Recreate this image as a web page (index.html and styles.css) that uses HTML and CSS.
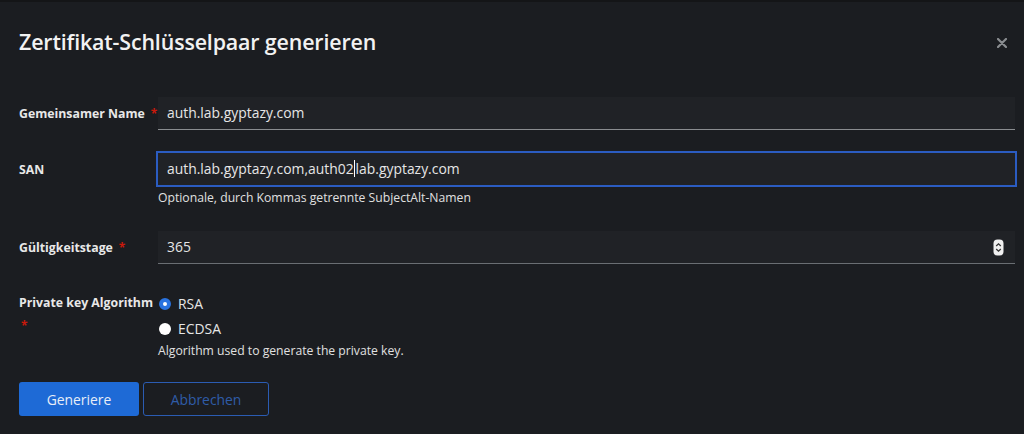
FILE: index.html
```html
<!DOCTYPE html>
<html lang="de">
<head>
<meta charset="utf-8">
<link rel="stylesheet" href="styles.css">
</head>
<body>
<div class="modal">
  <div class="topline"></div>
  <header class="header">
    <h1 class="title">Zertifikat-Schlüsselpaar generieren</h1>
    <button class="close" aria-label="Schließen">
      <svg width="10" height="10" viewBox="0 0 10 10"><path d="M1 1L9 9M9 1L1 9" stroke="#8a8d90" stroke-width="2.2" stroke-linecap="round"/></svg>
    </button>
  </header>
  <form class="form">
    <div class="row row-cn">
      <label class="label">Gemeinsamer Name<span class="req">*</span></label>
      <div class="control">
        <div class="input">auth.lab.gyptazy.com</div>
      </div>
    </div>
    <div class="row row-san">
      <label class="label">SAN</label>
      <div class="control">
        <div class="input focus">auth.lab.gyptazy.com,auth02<span class="caret"></span>lab.gyptazy.com</div>
        <div class="helper">Optionale, durch Kommas getrennte SubjectAlt-Namen</div>
      </div>
    </div>
    <div class="row row-days">
      <label class="label">Gültigkeitstage<span class="req">*</span></label>
      <div class="control">
        <div class="input number">365
          <svg class="spin" width="11" height="17" viewBox="0 0 11 17"><rect x="0.5" y="0.5" width="10" height="16" rx="4" fill="#f0f0f0"/><path d="M3.2 7L5.5 4.8L7.8 7M3.2 10L5.5 12.2L7.8 10" fill="none" stroke="#333" stroke-width="1.3"/></svg>
        </div>
      </div>
    </div>
    <div class="row row-alg">
      <label class="label wrap">Private key Algorithm<br><span class="req req-wrap">*</span></label>
      <div class="control">
        <div class="radio"><span class="dot checked"></span>RSA</div>
        <div class="radio"><span class="dot"></span>ECDSA</div>
        <div class="helper">Algorithm used to generate the private key.</div>
      </div>
    </div>
  </form>
  <footer class="footer">
    <button class="btn primary">Generiere</button>
    <button class="btn secondary">Abbrechen</button>
  </footer>
</div>
</body>
</html>
```
FILE: styles.css
```css
html, body {
  margin: 0;
  padding: 0;
  background: #1b1d21;
}
body {
  width: 1024px;
  height: 434px;
  overflow: hidden;
  font-family: "Open Sans", "Liberation Sans", sans-serif;
  color: #e0e0e0;
}
.modal {
  width: 1024px;
  height: 434px;
  background: #1b1d21;
}
.topline {
  height: 2px;
  background: #141517;
}
.header {
  display: flex;
  align-items: center;
  justify-content: space-between;
  padding: 22px 17px 0 19px;
  height: 34px;
}
.title {
  margin: 0;
  font-size: 21.4px;
  font-weight: 600;
  color: #f2f2f2;
  letter-spacing: -0.15px;
}
.close {
  background: none;
  border: 0;
  padding: 0;
  display: flex;
  margin-top: 4px;
}
.form {
  padding: 0 9px 0 19px;
  margin-top: 39px;
}
.row {
  display: flex;
  align-items: flex-start;
}
.label {
  width: 139px;
  flex: none;
  font-size: 12.3px;
  font-weight: 700;
  color: #e8e8e8;
  line-height: 34px;
}
.label.wrap {
  line-height: 18px;
  padding-top: 3px;
}
.req {
  color: #c9190b;
  margin-left: 6px;
  font-size: 12px;
}
.req-wrap {
  margin-left: 2px;
  line-height: 28px;
}
.control {
  flex: 1;
}
.input {
  height: 33px;
  box-sizing: border-box;
  background: #202226;
  border-bottom: 1px solid #8a8d90;
  padding: 0 9px;
  font-size: 13.9px;
  line-height: 32px;
  color: #e6e6e6;
  position: relative;
}
.input.focus {
  height: 32px;
  border: none;
  outline: 2px solid #2b5cc1;
  line-height: 32px;
}
.caret {
  display: inline-block;
  width: 1px;
  height: 17px;
  background: #ffffff;
  vertical-align: -3px;
  margin: 0 0.5px;
}
.number {
  border-bottom-color: #6a6e73;
}
.spin {
  position: absolute;
  right: 11px;
  top: 8px;
}
.row-cn { margin-top: 0; }
.row-san { margin-top: 22px; }
.row-days { margin-top: 25px; }
.row-alg { margin-top: 26px; }
.helper {
  font-size: 12.2px;
  color: #e0e0e0;
  margin-top: 5px;
  line-height: 16px;
}
.row-alg .helper { margin-top: 2px; }
.radio {
  display: flex;
  align-items: center;
  height: 25px;
  font-size: 13.9px;
  color: #e6e6e6;
}
.dot {
  width: 12px;
  height: 12px;
  border-radius: 50%;
  background: #ffffff;
  margin: 0 7px 0 1px;
  box-sizing: border-box;
}
.dot.checked {
  background: #ffffff;
  border: 4px solid #2a73e0;
}
.footer {
  display: flex;
  gap: 4px;
  padding-left: 19px;
  margin-top: 23px;
}
.btn {
  height: 34px;
  border-radius: 3px;
  font-family: "Open Sans", "Liberation Sans", sans-serif;
  font-size: 13.9px;
  padding: 0;
  box-sizing: border-box;
}
.primary {
  width: 120px;
  background: #1e6ad6;
  color: #e8eef8;
  border: 0;
}
.secondary {
  width: 126px;
  background: transparent;
  color: #2f5ca8;
  border: 1px solid #2b5cb3;
}
```
